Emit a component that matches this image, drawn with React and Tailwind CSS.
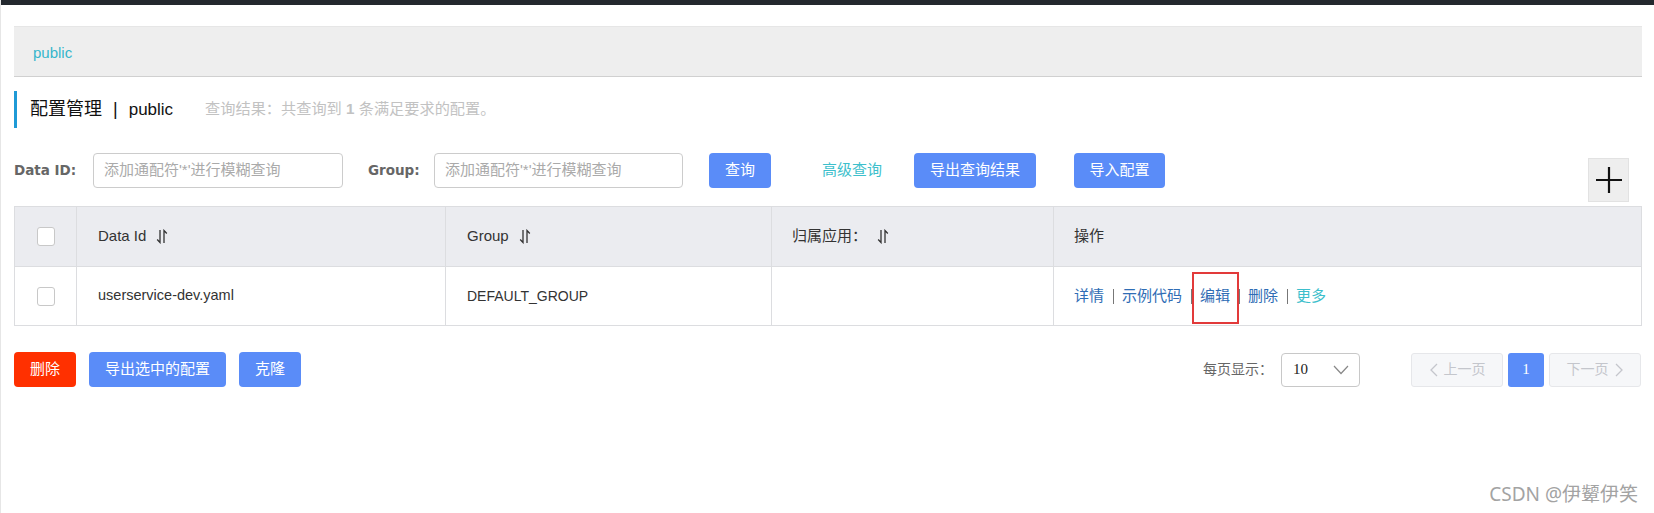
import React from "react";

const SortIcon = () => (
  <svg width="12" height="15" viewBox="0 0 12 15" className="ml-[10px]">
    <path d="M4 1 L4 13.5 L1.2 10.5" fill="none" stroke="#333" strokeWidth="1.3" />
    <path d="M8 14 L8 1.5 L10.8 4.5" fill="none" stroke="#333" strokeWidth="1.3" />
  </svg>
);

const Checkbox = () => (
  <div className="w-[18px] h-[19px] rounded-[3px] border border-[#c8c8c8] bg-white" />
);

const Sep = () => <span className="w-[1px] h-[15px] bg-[#777] mx-[8.5px]" />;

const App = () => {
  return (
    <div className="w-[1654px] h-[513px] bg-white relative overflow-hidden border-l border-[#e6e6e6] font-['Liberation_Sans','Noto_Sans_CJK_SC',sans-serif]">
      {/* top dark strip */}
      <div className="h-[5px] bg-[#23282e]" />

      <div className="pl-[13px] pr-[12px]">
        {/* namespace tab */}
        <div className="mt-[21px] h-[51px] bg-[#eeeeee] border-t border-[#e6e6e6] border-b border-b-[#d0d0d0] flex items-center pl-[19px] pt-[4px] text-[15px] text-[#36b6cc]">
          public
        </div>

        {/* title */}
        <div className="mt-[14px] h-[37px] border-l-[3px] border-[#1f9ad6] flex items-center pl-[13px]">
          <span className="text-[18px] text-[#111]">配置管理</span>
          <span className="text-[18px] text-[#111] mx-[11px]">|</span>
          <span className="text-[17px] text-[#111]">public</span>
          <span className="ml-[32px] text-[15.2px] text-[#c2c2c2]">
            查询结果：共查询到 <strong className="font-bold">1</strong> 条满足要求的配置。
          </span>
        </div>

        {/* search row */}
        <div className="mt-[25px] flex items-start">
          <div className="w-[63px] whitespace-nowrap h-[35px] flex items-center font-['DejaVu_Sans',sans-serif] font-bold text-[13.5px] text-[#666]">
            Data ID:
          </div>
          <div className="ml-[16px] w-[250px] h-[35px] border border-[#cccccc] rounded-[4px] flex items-center pl-[10px] text-[15px] text-[#aaaaaa]">
            添加通配符'*'进行模糊查询
          </div>
          <div className="ml-[25px] w-[50px] whitespace-nowrap h-[35px] flex items-center font-['DejaVu_Sans',sans-serif] font-bold text-[13.5px] text-[#666]">
            Group:
          </div>
          <div className="ml-[16px] w-[249px] h-[35px] border border-[#cccccc] rounded-[4px] flex items-center pl-[10px] text-[15px] text-[#aaaaaa]">
            添加通配符'*'进行模糊查询
          </div>
          <button className="ml-[26px] w-[62px] h-[35px] rounded-[4px] bg-[#5a8cf8] text-white text-[15px]">
            查询
          </button>
          <div className="ml-[51px] h-[35px] flex items-center text-[15px] text-[#3dbfcc]">
            高级查询
          </div>
          <button className="ml-[32px] w-[122px] h-[35px] rounded-[4px] bg-[#5a8cf8] text-white text-[15px]">
            导出查询结果
          </button>
          <button className="ml-[38px] w-[91px] h-[35px] rounded-[4px] bg-[#5a8cf8] text-white text-[15px]">
            导入配置
          </button>
          <div className="ml-auto mr-[13px] mt-[5px] w-[41px] h-[44px] bg-[#eeeeee] border border-[#e2e2e2] flex items-center justify-center">
            <svg width="26" height="26" viewBox="0 0 26 26">
              <path d="M13 0 V26 M0 13 H26" stroke="#111" strokeWidth="2.2" />
            </svg>
          </div>
        </div>

        {/* table */}
        <div className="mt-[4px] border border-[#dcdde0]">
          <div className="grid grid-cols-[62px_369px_326px_282px_1fr] h-[59px] bg-[#ebecf0] text-[15px] text-[#333]">
            <div className="flex items-center justify-center border-r border-[#dcdde0]">
              <Checkbox />
            </div>
            <div className="flex items-center pl-[21px] border-r border-[#dcdde0]">
              Data Id
              <SortIcon />
            </div>
            <div className="flex items-center pl-[21px] border-r border-[#dcdde0]">
              Group
              <SortIcon />
            </div>
            <div className="flex items-center pl-[20px] border-r border-[#dcdde0]">
              归属应用：
              <SortIcon />
            </div>
            <div className="flex items-center pl-[20px]">操作</div>
          </div>
          <div className="grid grid-cols-[62px_369px_326px_282px_1fr] h-[59px] border-t border-[#dcdde0] bg-white text-[14px] text-[#333]">
            <div className="flex items-center justify-center border-r border-[#dcdde0]">
              <Checkbox />
            </div>
            <div className="flex items-center pl-[21px] border-r border-[#dcdde0] text-[14.5px]">
              userservice-dev.yaml
            </div>
            <div className="flex items-center pl-[21px] border-r border-[#dcdde0]">
              DEFAULT_GROUP
            </div>
            <div className="border-r border-[#dcdde0]" />
            <div className="flex items-center pl-[20px] text-[15px] text-[#2f6db5]">
              <span>详情</span>
              <Sep />
              <span>示例代码</span>
              <Sep />
              <span className="relative">
                编辑
                <span className="absolute left-[-8px] right-[-9px] top-[-13px] bottom-[-17px] border-2 border-[#e23a3a] z-10" />
              </span>
              <Sep />
              <span>删除</span>
              <Sep />
              <span className="text-[#3dbfcc]">更多</span>
            </div>
          </div>
        </div>

        {/* bottom actions + pagination */}
        <div className="mt-[26px] flex items-center">
          <button className="w-[62px] h-[35px] rounded-[4px] bg-[#ff3000] text-white text-[15px]">
            删除
          </button>
          <button className="ml-[13px] w-[137px] h-[35px] rounded-[4px] bg-[#5a8cf8] text-white text-[15px]">
            导出选中的配置
          </button>
          <button className="ml-[13px] w-[62px] h-[35px] rounded-[4px] bg-[#5a8cf8] text-white text-[15px]">
            克隆
          </button>

          <div className="ml-auto flex items-center mr-[1px]">
            <span className="text-[14px] text-[#666]">每页显示：</span>
            <div className="ml-[8px] w-[79px] h-[34px] border border-[#c8c8c8] rounded-[4px] flex items-center justify-between pl-[11px] pr-[10px]">
              <span className="font-['Liberation_Serif',serif] text-[15px] text-[#222]">10</span>
              <svg width="16" height="10" viewBox="0 0 16 10">
                <path d="M1 1 L8 8.5 L15 1" fill="none" stroke="#888" strokeWidth="1.2" />
              </svg>
            </div>
            <div className="ml-[51px] w-[92px] h-[34px] rounded-[3px] border border-[#e6e7ea] bg-[#f6f7f9] flex items-center justify-center text-[14px] text-[#c4c6cc]">
              <svg width="9" height="14" viewBox="0 0 9 14" className="mr-[6px]">
                <path d="M8 1 L2 7 L8 13" fill="none" stroke="#c4c6cc" strokeWidth="1.3" />
              </svg>
              上一页
            </div>
            <div className="ml-[5px] w-[36px] h-[34px] rounded-[3px] bg-[#5a8cf8] flex items-center justify-center font-['Liberation_Serif',serif] text-[15px] text-white">
              1
            </div>
            <div className="ml-[5px] w-[92px] h-[34px] rounded-[3px] border border-[#e6e7ea] bg-[#f6f7f9] flex items-center justify-center text-[14px] text-[#c4c6cc]">
              下一页
              <svg width="9" height="14" viewBox="0 0 9 14" className="ml-[6px]">
                <path d="M1 1 L7 7 L1 13" fill="none" stroke="#c4c6cc" strokeWidth="1.3" />
              </svg>
            </div>
          </div>
        </div>
      </div>

      {/* watermark */}
      <div className="absolute right-[16px] top-[482px] text-[19px] leading-[24px] text-[#a3a3a3] font-['Noto_Sans','Noto_Sans_CJK_SC',sans-serif]">
        CSDN @伊颦伊笑
      </div>
    </div>
  );
};

export default App;
